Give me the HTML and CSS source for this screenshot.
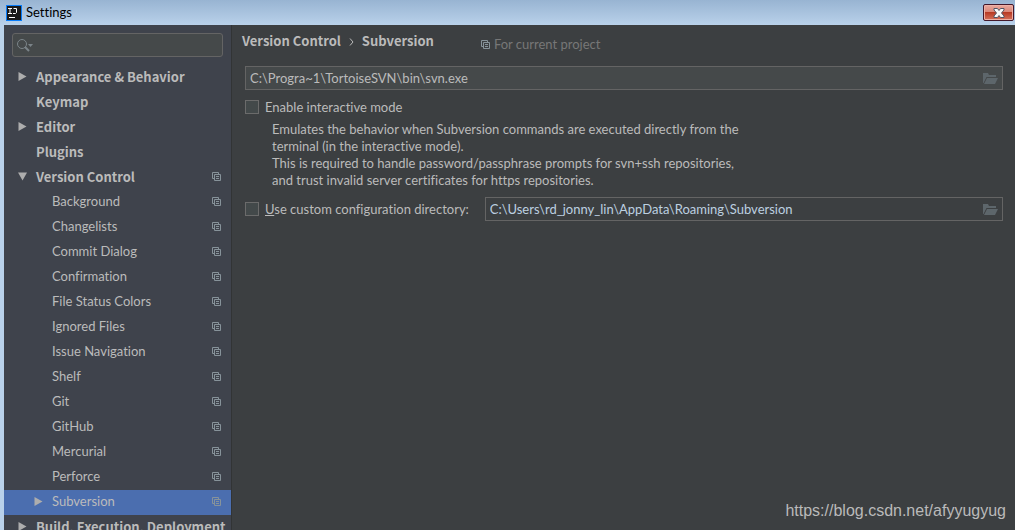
FILE: index.html
```html
<!DOCTYPE html>
<html lang="en">

<head>
    <meta charset="UTF-8">
    <meta name="viewport" content="width=device-width, initial-scale=1.0">
    <title>Settings</title>
    <link rel="stylesheet" href="styles.css">
</head>

<body>
    <!-- shared icons -->
    <svg class="sprite" aria-hidden="true">
        <symbol id="copy" viewBox="0 0 9 9">
            <path d="M2.5 6.5H.5V.5H6.5V2.5M2.5 2.5H8.5V8.5H2.5ZM4 4.5H7M4 6.5H7" fill="none" stroke="currentColor" />
        </symbol>
        <symbol id="folder" viewBox="0 0 15 11">
            <path d="M0 10V0H5L6 2H13V4H3.500L.5 10Z" fill="currentColor" />
            <path d="M4 5H15L12 11H1Z" fill="currentColor" />
        </symbol>
        <symbol id="right" viewBox="0 0 8 9">
            <path d="M0 0L8 4.500L0 9Z" fill="currentColor" />
        </symbol>
        <symbol id="down" viewBox="0 0 9 8">
            <path d="M0 0H9L4.500 8Z" fill="currentColor" />
        </symbol>
    </svg>

    <div class="window">
        <header class="titlebar">
            <svg class="logo" viewBox="0 0 16 16" aria-hidden="true">
                <rect width="16" height="16" fill="#087cfa" />
                <rect x="1" y="1" width="14" height="14" fill="#1a1a1a" />
                <path d="M2 3.500H6M4 3.500V8M2 8.500H6M7.500 3.500H10.500V7.500L9.500 8.500H7" fill="none" stroke="#fff" />
                <path d="M3 12.500H9" stroke="#fff" />
            </svg>
            <h1>Settings</h1>
            <button class="close" aria-label="Close">
                <svg viewBox="0 0 12 10" aria-hidden="true">
                    <path d="M1 .5H4.500L6 2.500L7.500 .5H11V2L8.500 5L11 8V9.500H7.500L6 7.500L4.500 9.500H1V8L3.500 5L1 2Z" fill="#f8f8f8" stroke="#535666" />
                </svg>
            </button>
        </header>

        <div class="content">
            <aside class="sidebar">
                <div class="search">
                    <svg viewBox="0 0 17 13" aria-hidden="true">
                        <circle cx="5" cy="5" r="4.500" fill="none" stroke="currentColor" />
                        <path d="M8 8L12 12" stroke="currentColor" stroke-width="2" />
                        <path d="M11 5H16L13.500 8Z" fill="currentColor" />
                    </svg>
                    <input type="text" aria-label="Search settings">
                </div>
                <nav class="tree">
                    <a href="#" class="group"><svg class="arrow"><use href="#right" /></svg><span>Appearance &amp; Behavior</span></a>
                    <a href="#" class="group"><span>Keymap</span></a>
                    <a href="#" class="group"><svg class="arrow"><use href="#right" /></svg><span>Editor</span></a>
                    <a href="#" class="group"><span>Plugins</span></a>
                    <a href="#" class="group"><svg class="arrow"><use href="#down" /></svg><span>Version Control</span><svg class="copy"><use href="#copy" /></svg></a>
                    <a href="#" class="item"><span>Background</span><svg class="copy"><use href="#copy" /></svg></a>
                    <a href="#" class="item"><span>Changelists</span><svg class="copy"><use href="#copy" /></svg></a>
                    <a href="#" class="item"><span>Commit Dialog</span><svg class="copy"><use href="#copy" /></svg></a>
                    <a href="#" class="item"><span>Confirmation</span><svg class="copy"><use href="#copy" /></svg></a>
                    <a href="#" class="item"><span>File Status Colors</span><svg class="copy"><use href="#copy" /></svg></a>
                    <a href="#" class="item"><span>Ignored Files</span><svg class="copy"><use href="#copy" /></svg></a>
                    <a href="#" class="item"><span>Issue Navigation</span><svg class="copy"><use href="#copy" /></svg></a>
                    <a href="#" class="item"><span>Shelf</span><svg class="copy"><use href="#copy" /></svg></a>
                    <a href="#" class="item"><span>Git</span><svg class="copy"><use href="#copy" /></svg></a>
                    <a href="#" class="item"><span>GitHub</span><svg class="copy"><use href="#copy" /></svg></a>
                    <a href="#" class="item"><span>Mercurial</span><svg class="copy"><use href="#copy" /></svg></a>
                    <a href="#" class="item"><span>Perforce</span><svg class="copy"><use href="#copy" /></svg></a>
                    <a href="#" class="item selected"><svg class="arrow"><use href="#right" /></svg><span>Subversion</span><svg class="copy"><use href="#copy" /></svg></a>
                    <a href="#" class="group"><svg class="arrow"><use href="#right" /></svg><span>Build, Execution, Deployment</span></a>
                </nav>
            </aside>

            <main class="panel">
                <div class="heading">
                    <h2>Version Control <svg class="chevron" viewBox="0 0 5 8" aria-hidden="true"><path d="M1 .5L4 4L1 7.500" fill="none" stroke="currentColor" /></svg> Subversion</h2>
                    <p class="scope"><svg class="copy"><use href="#copy" /></svg>For current project</p>
                </div>

                <div class="path-field filled">
                    <input type="text" aria-label="Path to svn executable" value="C:\Progra~1\TortoiseSVN\bin\svn.exe">
                    <button aria-label="Browse"><svg><use href="#folder" /></svg></button>
                </div>

                <div class="check-row">
                    <input type="checkbox" id="interactive">
                    <label for="interactive">Enable interactive mode</label>
                </div>
                <p class="hint">
                    Emulates the behavior when Subversion commands are executed directly from the<br>
                    terminal (in the interactive mode).<br>
                    This is required to handle password/passphrase prompts for svn+ssh repositories,<br>
                    and trust invalid server certificates for https repositories.
                </p>

                <div class="check-row">
                    <input type="checkbox" id="customDir">
                    <label for="customDir"><u>U</u>se custom configuration directory:</label>
                    <div class="path-field">
                        <input type="text" aria-label="Configuration directory" value="C:\Users\rd_jonny_lin\AppData\Roaming\Subversion">
                        <button aria-label="Browse"><svg><use href="#folder" /></svg></button>
                    </div>
                </div>

                <div class="watermark">https://blog.csdn.net/afyyugyug</div>
            </main>
        </div>
    </div>
</body>

</html>
```

FILE: styles.css
```css
* {
    box-sizing: border-box;
}

body {
    margin: 0;
    background-color: #3c3f41;
    color: #bbbbbb;
    font-family: Lato, sans-serif;
    font-size: 13px;
    line-height: 17px;
    font-variant-ligatures: none;
}

h1,
h2,
p {
    margin: 0;
}

input,
button {
    font: inherit;
    color: inherit;
}

.sprite {
    display: none;
}

.window {
    display: flex;
    flex-direction: column;
    height: 100vh;
    overflow: hidden;
}

.titlebar {
    display: flex;
    align-items: center;
    flex: none;
    height: 25px;
    padding-left: 6px;
    padding-right: 1px;
    gap: 4px;
    background: linear-gradient(#98b4d2, #b9d1ea);
    color: #000;
}

.titlebar h1 {
    font-size: 13px;
    font-weight: normal;
}

.logo {
    width: 16px;
    height: 16px;
}

.close {
    display: flex;
    align-items: center;
    justify-content: center;
    width: 31px;
    height: 17px;
    margin-left: auto;
    padding: 0;
    border: 1px solid #43182a;
    border-radius: 2px;
    box-shadow: inset 0 0 0 1px #eeb0a6;
    background: linear-gradient(#e9a99e 0%, #d98577 48%, #b83a24 50%, #d5715c 100%);
}

.close svg {
    width: 12px;
    height: 10px;
}

.content {
    display: flex;
    flex: 1;
    min-height: 0;
    border-left: 4px solid #b9d1ea;
}

.sidebar {
    flex: none;
    width: 228px;
    padding-top: 8px;
    overflow: hidden;
    background-color: #3f434c;
    border-right: 1px solid #323435;
}

.search {
    display: flex;
    align-items: center;
    height: 24px;
    margin: 0 8px 8px;
    padding: 0 4px;
    border: 1px solid #646464;
    border-radius: 3px;
    background-color: #45494a;
    color: #7b8489;
}

.search svg {
    flex: none;
    width: 17px;
    height: 13px;
}

.search input {
    flex: 1;
    min-width: 0;
    border: none;
    outline: none;
    background: none;
}

.tree a {
    display: flex;
    align-items: center;
    height: 25px;
    padding-right: 10px;
    padding-bottom: 2px;
    color: inherit;
    text-decoration: none;
    white-space: nowrap;
}

.tree .group {
    padding-left: 32px;
    font-family: "Noto Sans CJK SC", sans-serif;
    font-weight: bold;
}

.tree .item {
    padding-left: 48px;
}

.tree .selected {
    background-color: #4b6eaf;
}

.arrow {
    flex: none;
    width: 9px;
    height: 9px;
    margin-left: -18px;
    margin-right: 9px;
    color: #adadad;
}

.copy {
    flex: none;
    width: 9px;
    height: 9px;
    color: #87939a;
}

.tree .copy {
    margin-left: auto;
}

.panel {
    flex: 1;
    min-width: 0;
    padding: 7px 12px 0 13px;
}

.heading {
    display: flex;
    align-items: flex-start;
    gap: 47px;
    height: 34px;
    margin-left: -3px;
}

.heading h2 {
    font-family: "Noto Sans CJK SC", sans-serif;
    font-size: 13px;
    line-height: 18px;
}

.chevron {
    width: 5px;
    height: 8px;
    margin: 0 5px;
}

.scope {
    display: flex;
    align-items: center;
    gap: 4px;
    padding-top: 3px;
    line-height: 18px;
    color: #777777;
}

.path-field {
    display: flex;
    align-items: center;
    flex: 1;
    height: 24px;
    padding: 0 4px;
    border: 1px solid #646464;
    color: #bcd0e0;
}

.filled {
    background-color: #45494a;
    color: #bbbbbb;
}

.path-field input {
    flex: 1;
    min-width: 0;
    padding: 0;
    border: none;
    outline: none;
    background: none;
}

.path-field button {
    display: flex;
    padding: 0;
    border: none;
    background: none;
    color: #5d666b;
}

.path-field svg {
    width: 15px;
    height: 11px;
}

.check-row {
    display: flex;
    align-items: center;
    min-height: 24px;
}

.filled + .check-row {
    margin-top: 5px;
}

.check-row input[type="checkbox"] {
    appearance: none;
    flex: none;
    width: 14px;
    height: 14px;
    margin: 0 6px 0 0;
    border: 1px solid #6b6b6b;
    background-color: #43494a;
}

.check-row input[type="checkbox"]:checked {
    background-color: #4b6eaf;
}

.check-row .path-field {
    margin-left: 16px;
}

.hint {
    margin: 2px 0 8px 27px;
}

/* sits over the panel in the corner */
.watermark {
    position: absolute;
    right: 9px;
    bottom: 10px;
    font-family: "Liberation Sans", Arial, sans-serif;
    font-size: 16px;
    line-height: 18px;
    color: #bababa;
}
```
